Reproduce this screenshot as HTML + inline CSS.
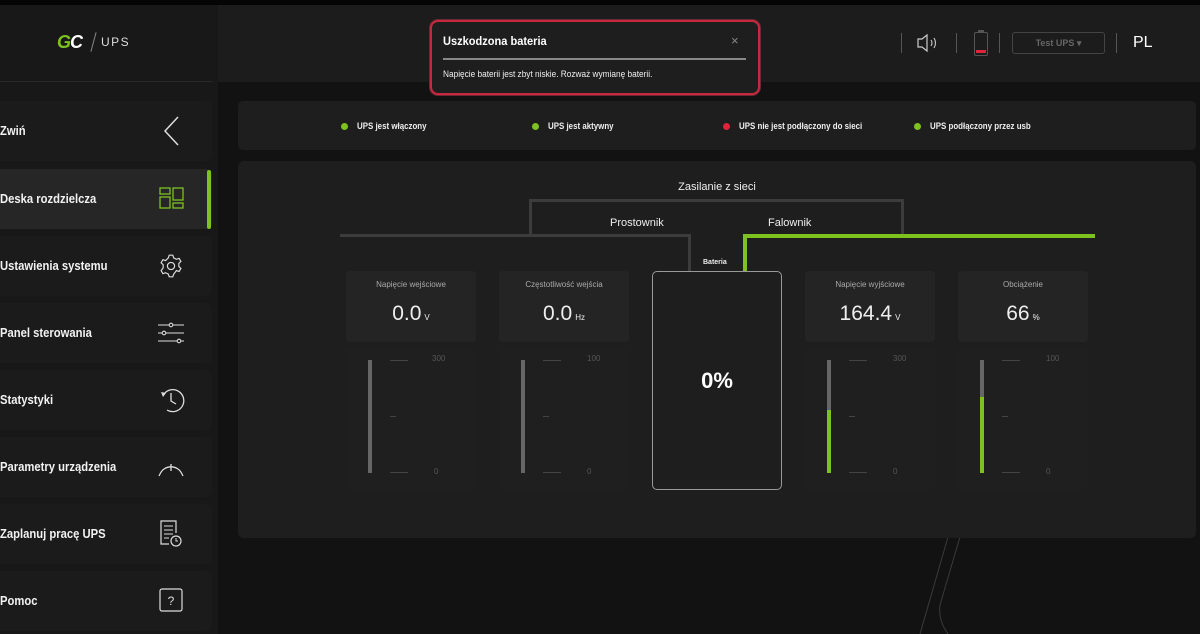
<!DOCTYPE html>
<html><head><meta charset="utf-8"><style>
*{margin:0;padding:0;box-sizing:border-box}
body{width:1200px;height:634px;overflow:hidden;background:#121212;font-family:"Liberation Sans",sans-serif;color:#fff;position:relative}
.a{position:absolute}
.side{left:0;top:5px;width:218px;height:629px;background:#181818}
.item{position:absolute;left:0;width:212px;height:60px;background:#1b1b1b;border-radius:0 6px 6px 0}
.item span{position:absolute;left:0;top:23px;font:bold 12.5px "Liberation Sans",sans-serif;color:#f2f2f2;transform:scaleX(0.9);transform-origin:left;white-space:nowrap}
.item svg{position:absolute;left:156px;top:15px}
.card{position:absolute;width:130px;height:219px;top:271px}
.ct{position:absolute;left:0;top:0;width:130px;height:71px;background:#242424;border-radius:4px}
.cb{position:absolute;left:0;top:77px;width:130px;height:142px;background:#1f1f1f;border-radius:4px}
.ct .l{position:absolute;top:9px;width:100%;text-align:center;font-size:8px;color:#aaa}
.ct .v{position:absolute;top:31px;width:100%;text-align:center;font-size:21px;color:#eee}
.ct .v small{font-size:8px;margin-left:3px}
.bar{position:absolute;left:22px;top:12px;width:4px;height:113px;background:#666}
.tk{position:absolute;height:1px;background:#444;left:44px;width:18px}
.num{position:absolute;font-size:8px;color:#555}
.st{font:bold 9px "Liberation Sans",sans-serif;color:#eee;position:absolute;top:121px;transform:scaleX(0.88);transform-origin:left;white-space:nowrap}
.dot{position:absolute;top:123px;width:7px;height:7px;border-radius:50%}
</style></head><body>
<div class="a" style="left:0;top:0;width:1200px;height:5px;background:#050505"></div>
<div class="a side"></div>
<div class="a" style="left:218px;top:5px;width:982px;height:77px;background:#1c1c1c"></div>
<div class="a" style="left:0;top:81px;width:212px;height:1px;background:#2a2a2a"></div>
<div class="a" style="left:57px;top:32px;font:italic 900 18px 'Liberation Sans',sans-serif;color:#7dc21e;letter-spacing:-1px">G<span style="color:#fff">C</span></div>
<div class="a" style="left:93px;top:32px;width:1px;height:20px;background:#888;transform:rotate(15deg)"></div>
<div class="a" style="left:101px;top:35px;font-size:12px;color:#ddd;letter-spacing:1.5px">UPS</div>

<div class="item" style="top:101px"><span>Zwiń</span><svg width="30" height="32" style="top:14px"><path d="M22 2 L9 16 L22 30" stroke="#ddd" stroke-width="1.5" fill="none"/></svg></div>
<div class="item" style="top:169px;background:#262626"><span>Deska rozdzielcza</span><svg width="30" height="30"><g stroke="#7dc21e" stroke-width="1.3" fill="none"><rect x="4" y="4" width="10" height="6"/><rect x="4" y="13" width="10" height="11"/><rect x="17" y="4" width="10" height="12"/><rect x="17" y="19" width="10" height="5"/></g></svg></div>
<div class="a" style="left:207px;top:170px;width:4px;height:59px;background:#7dc21e;border-radius:2px"></div>
<div class="item" style="top:236px"><span>Ustawienia systemu</span><svg width="30" height="30"><g transform="translate(15 15) scale(0.9) translate(-15 -15)"><circle cx="15" cy="15" r="4" stroke="#ddd" stroke-width="1.3" fill="none"/><path d="M13 3h4l1 3 3 1.5 3-1 2 3.4-2.3 2.2v3.4l2.3 2.2-2 3.4-3-1L18 24l-1 3h-4l-1-3-3-1.5-3 1-2-3.4L6.3 17v-3.4L4 11.4l2-3.4 3 1L12 6z" stroke="#ddd" stroke-width="1.3" fill="none"/></g></svg></div>
<div class="item" style="top:303px"><span>Panel sterowania</span><svg width="30" height="30"><g stroke="#ddd" stroke-width="1.1" fill="#1b1b1b"><path d="M2 7h26M2 15h26M2 23h26"/><circle cx="15" cy="7" r="1.8"/><circle cx="8" cy="15" r="1.8"/><circle cx="23" cy="23" r="1.8"/></g></svg></div>
<div class="item" style="top:370px"><span>Statystyki</span><svg width="30" height="30"><path d="M8 9 A11 11 0 1 1 11 25" stroke="#ddd" stroke-width="1.3" fill="none"/><path d="M5 7l5 1-3 4z" fill="#ddd"/><path d="M15 8v8l5 3" stroke="#ddd" stroke-width="1.3" fill="none"/></svg></div>
<div class="item" style="top:437px"><span>Parametry urządzenia</span><svg width="30" height="30" style="top:17px"><path d="M4 20 A12 12 0 0 1 26 20" stroke="#ddd" stroke-width="1.3" fill="none"/><path d="M15 10v7M4 20l-1 2M26 20l1 2" stroke="#ddd" stroke-width="1.3"/></svg></div>
<div class="item" style="top:504px"><span>Zaplanuj pracę UPS</span><svg width="30" height="30"><path d="M20 14V2H5v23h8" stroke="#ddd" stroke-width="1.2" fill="none"/><path d="M8 7h9M8 11h9M8 15h9M8 19h5" stroke="#ddd" stroke-width="1"/><circle cx="20" cy="22" r="5" stroke="#ddd" stroke-width="1.2" fill="none"/><path d="M20 19v3h2" stroke="#ddd"/></svg></div>
<div class="item" style="top:571px"><span>Pomoc</span><svg width="30" height="30"><rect x="4" y="3" width="22" height="22" rx="2" stroke="#ddd" stroke-width="1.2" fill="none"/><text x="15" y="19" font-size="12" fill="#ddd" text-anchor="middle" font-family="Liberation Sans">?</text></svg></div>

<div class="a" style="left:901px;top:33px;width:1px;height:20px;background:#555"></div>
<svg class="a" style="left:915px;top:33px" width="30" height="20"><path d="M3 6h4l5-4v16l-5-4H3z" stroke="#ccc" stroke-width="1.2" fill="none"/><path d="M16 7q2 3 0 6M19 5q3 5 0 10" stroke="#ccc" stroke-width="1.1" fill="none"/></svg>
<div class="a" style="left:956px;top:33px;width:1px;height:20px;background:#555"></div>
<div class="a" style="left:974px;top:32px;width:14px;height:24px;border:1px solid #555;border-radius:2px"></div>
<div class="a" style="left:978px;top:30px;width:6px;height:2px;background:#555"></div>
<div class="a" style="left:976px;top:50px;width:10px;height:3px;background:#e0223c"></div>
<div class="a" style="left:999px;top:33px;width:1px;height:20px;background:#555"></div>
<div class="a" style="left:1012px;top:32px;width:93px;height:22px;border:1px solid #444;border-radius:3px;font:bold 9px 'Liberation Sans',sans-serif;color:#666;text-align:center;line-height:20px">Test UPS ▾</div>
<div class="a" style="left:1116px;top:33px;width:1px;height:20px;background:#555"></div>
<div class="a" style="left:1133px;top:34px;font-size:16px;color:#fff">PL</div>

<div class="a" style="left:430px;top:20px;width:330px;height:75px;background:#1e1e1e;border:2px solid #c8283e;border-radius:8px;box-shadow:0 0 0 1px #6a2a33"></div>
<div class="a" style="left:443px;top:34px;font:bold 12px 'Liberation Sans',sans-serif;color:#fff;transform:scaleX(0.92);transform-origin:left">Uszkodzona bateria</div>
<div class="a" style="left:731px;top:33px;font-size:13px;color:#888">×</div>
<div class="a" style="left:443px;top:58px;width:303px;height:2px;background:#888"></div>
<div class="a" style="left:443px;top:69px;font:9px 'Liberation Sans',sans-serif;color:#eee;transform:scaleX(0.92);transform-origin:left;white-space:nowrap">Napięcie baterii jest zbyt niskie. Rozważ wymianę baterii.</div>

<div class="a" style="left:238px;top:101px;width:958px;height:49px;background:#1e1e1e;border-radius:5px"></div>
<div class="dot" style="left:341px;background:#7dc21e"></div><div class="st" style="left:357px">UPS jest włączony</div>
<div class="dot" style="left:532px;background:#7dc21e"></div><div class="st" style="left:548px">UPS jest aktywny</div>
<div class="dot" style="left:723px;background:#e0223c"></div><div class="st" style="left:739px">UPS nie jest podłączony do sieci</div>
<div class="dot" style="left:914px;background:#7dc21e"></div><div class="st" style="left:930px">UPS podłączony przez usb</div>

<svg class="a" style="left:900px;top:530px" width="100" height="104"><path d="M50 0 L20 104 M62 0 L40 75 Q38 90 48 104" stroke="#3a3a3a" stroke-width="1" fill="none"/></svg>

<div class="a" style="left:238px;top:161px;width:958px;height:377px;background:#1e1e1e;border-radius:6px"></div>
<div class="a" style="left:0;top:181px;width:1434px;text-align:center;font-size:11px;color:#eee">Zasilanie z sieci</div>
<div class="a" style="left:529px;top:199px;width:375px;height:36px;border:3px solid #3c3c3c;border-bottom:none"></div>
<div class="a" style="left:610px;top:217px;font-size:11px;color:#eee">Prostownik</div>
<div class="a" style="left:768px;top:217px;font-size:11px;color:#eee">Falownik</div>
<div class="a" style="left:340px;top:234px;width:351px;height:37px;border-top:3px solid #3c3c3c;border-right:3px solid #3c3c3c"></div>
<div class="a" style="left:743px;top:234px;width:352px;height:37px;border-top:4px solid #7dc21e;border-left:4px solid #7dc21e"></div>
<div class="a" style="left:703px;top:259px;font:bold 7px 'Liberation Sans',sans-serif;color:#eee">Bateria</div>

<div class="card" style="left:346px"><div class="ct"><div class="l">Napięcie wejściowe</div><div class="v">0.0<small>V</small></div></div>
<div class="cb"><div class="bar"></div><div class="tk" style="top:12px"></div><div class="tk" style="top:68px;width:6px"></div><div class="tk" style="top:124px"></div><div class="num" style="left:86px;top:6px">300</div><div class="num" style="left:88px;top:119px">0</div></div></div>
<div class="card" style="left:499px"><div class="ct"><div class="l">Częstotliwość wejścia</div><div class="v">0.0<small>Hz</small></div></div>
<div class="cb"><div class="bar"></div><div class="tk" style="top:12px"></div><div class="tk" style="top:68px;width:6px"></div><div class="tk" style="top:124px"></div><div class="num" style="left:88px;top:6px">100</div><div class="num" style="left:88px;top:119px">0</div></div></div>
<div class="a" style="left:652px;top:271px;width:130px;height:219px;border:1px solid #999;border-radius:5px;text-align:center;line-height:217px;font-size:22px;font-weight:bold;color:#fff">0%</div>
<div class="card" style="left:805px"><div class="ct"><div class="l">Napięcie wyjściowe</div><div class="v">164.4<small>V</small></div></div>
<div class="cb"><div class="bar"></div><div class="bar" style="top:62px;height:63px;background:#7dc21e"></div><div class="tk" style="top:12px"></div><div class="tk" style="top:68px;width:6px"></div><div class="tk" style="top:124px"></div><div class="num" style="left:88px;top:6px">300</div><div class="num" style="left:88px;top:119px">0</div></div></div>
<div class="card" style="left:958px"><div class="ct"><div class="l">Obciążenie</div><div class="v">66<small>%</small></div></div>
<div class="cb"><div class="bar"></div><div class="bar" style="top:49px;height:76px;background:#7dc21e"></div><div class="tk" style="top:12px"></div><div class="tk" style="top:68px;width:6px"></div><div class="tk" style="top:124px"></div><div class="num" style="left:88px;top:6px">100</div><div class="num" style="left:88px;top:119px">0</div></div></div>
</body></html>
